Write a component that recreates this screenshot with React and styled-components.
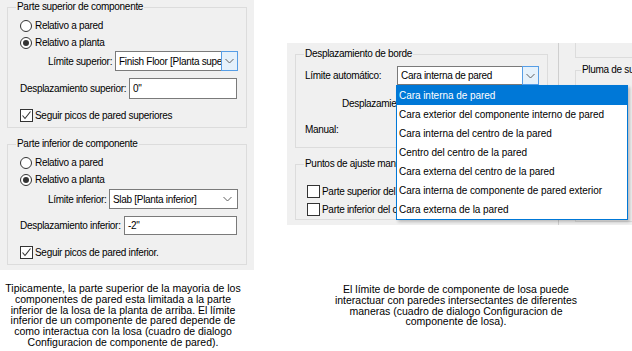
import React from "react";
import styled, { createGlobalStyle } from "styled-components";

const GlobalStyle = createGlobalStyle`
  html, body { margin: 0; padding: 0; background: #ffffff; }
  body {
    font-family: "Liberation Sans", Arial, sans-serif;
    font-size: 10px;
    letter-spacing: -0.3px;
    color: #000;
  }
  * { box-sizing: border-box; }
`;

const Page = styled.div`
  width: 632px;
  height: 351px;
  display: flex;
  align-items: flex-start;
  overflow: hidden;
`;

const LeftColumn = styled.div`
  width: 254px;
  flex: none;
  display: flex;
  flex-direction: column;
`;

const RightColumn = styled.div`
  width: 345px;
  flex: none;
  margin-left: 33px;
  padding-top: 43px;
  display: flex;
  flex-direction: column;
`;

const LeftPanel = styled.div`
  background: #f0f0f0;
  padding: 0 7px 5px 7px;
  display: flex;
  flex-direction: column;
`;

const Group = styled.fieldset`
  margin: 0;
  min-width: 0;
  border: 1px solid #dcdcdc;
  padding: ${(p) => p.$pad || "3px 8px 4px 8px"};
  & + & {
    margin-top: ${(p) => p.$gap || 11}px;
  }
`;

const Legend = styled.legend`
  padding: 0 1px;
  margin-left: ${(p) => p.$ml || 0}px;
  line-height: 14px;
  white-space: nowrap;
`;

const Row = styled.div`
  display: flex;
  align-items: center;
  height: ${(p) => p.$h || 17}px;
  margin-top: ${(p) => p.$mt || 0}px;
  padding-left: ${(p) => p.$indent || 0}px;
  gap: ${(p) => p.$gap || 0}px;
  white-space: nowrap;
`;

const Label = styled.span`
  flex: none;
  width: ${(p) => (p.$w ? `${p.$w}px` : "auto")};
  white-space: nowrap;
`;

const RadioCircle = styled.span`
  flex: none;
  width: 12px;
  height: 12px;
  border: 1px solid #333;
  border-radius: 50%;
  background: #fff;
  display: flex;
  align-items: center;
  justify-content: center;
  margin-right: 3px;
  &::after {
    content: "";
    width: 6px;
    height: 6px;
    border-radius: 50%;
    background: #333;
    display: ${(p) => (p.$checked ? "block" : "none")};
  }
`;

const CheckBox = styled.span`
  flex: none;
  width: 13px;
  height: 13px;
  border: 1px solid #333;
  background: #fff;
  display: flex;
  align-items: center;
  justify-content: center;
  margin-right: 2px;
`;

const Select = styled.div`
  position: relative;
  flex: ${(p) => (p.$w ? "none" : "1")};
  min-width: 0;
  width: ${(p) => (p.$w ? `${p.$w}px` : "auto")};
  height: ${(p) => p.$h || 20}px;
  border: 1px solid #7a7a7a;
  background: #fff;
  display: flex;
  align-items: stretch;
`;

const SelectText = styled.span`
  flex: 1;
  min-width: 0;
  overflow: hidden;
  white-space: nowrap;
  padding-left: 3px;
  display: flex;
  align-items: center;
`;

const SelectButton = styled.span`
  flex: none;
  width: ${(p) => (p.$hot ? 17 : 16)}px;
  display: flex;
  align-items: center;
  justify-content: center;
  background: ${(p) => (p.$hot ? "#e5f1fb" : "transparent")};
  border: ${(p) => (p.$hot ? "1px solid #569de5" : "none")};
  margin: ${(p) => (p.$hot ? "-1px -1px -1px 0" : "0 2px 0 0")};
`;

const TextInput = styled.div`
  flex: 1;
  min-width: 0;
  height: ${(p) => p.$h || 20}px;
  margin-right: 1px;
  border: 1px solid #7a7a7a;
  background: #fff;
  padding-left: 3px;
  display: flex;
  align-items: center;
`;

const DropList = styled.div`
  position: absolute;
  z-index: 10;
  left: -2px;
  top: calc(100% + 1px);
  width: 232px;
  border: 1px solid #0078d7;
  background: #fff;
  box-shadow: 2px 2px 3px rgba(0, 0, 0, 0.22);
  display: flex;
  flex-direction: column;
`;

const DropItem = styled.div`
  height: 19px;
  padding-left: 2px;
  display: flex;
  align-items: center;
  white-space: nowrap;
  letter-spacing: -0.05px;
  background: ${(p) => (p.$active ? "#0078d7" : "transparent")};
  color: ${(p) => (p.$active ? "#fff" : "#000")};
`;

const Caption = styled.p`
  margin: ${(p) => p.$mt}px 0 0 0;
  padding-right: ${(p) => p.$pr || 0}px;
  width: ${(p) => p.$w}px;
  text-align: center;
  line-height: 10.8px;
  font-size: 10.5px;
  letter-spacing: 0;
`;

const RightPanel = styled.div`
  background: #f0f0f0;
  height: 182px;
  display: flex;
`;

const PanelMain = styled.div`
  width: 271px;
  flex: none;
  padding: 4px 10px 5px 8px;
  display: flex;
  flex-direction: column;
  position: relative;
  z-index: 2;
`;

const Side = styled.div`
  flex: 1;
  border-left: 1px solid #cfcfcf;
  padding-left: 16px;
  overflow: hidden;
  display: flex;
  flex-direction: column;
`;

const ClippedBox = styled.div`
  width: 100px;
  height: 15px;
  border-left: 1px solid #dcdcdc;
  border-bottom: 1px solid #dcdcdc;
  flex: none;
`;

const SideGroup = styled.fieldset`
  margin: 5px 0 0 0;
  width: 100px;
  height: 159px;
  border: 1px solid #dcdcdc;
  padding: 0;
  flex: none;
`;

const Chevron = () => (
  <svg width="9" height="6" viewBox="0 0 9 6">
    <polyline points="0.5,1 4.5,5 8.5,1" fill="none" stroke="#606060" strokeWidth="1" />
  </svg>
);

const Check = () => (
  <svg width="11" height="11" viewBox="0 0 11 11">
    <polyline points="1.5,5.5 4,8.5 9.5,1.5" fill="none" stroke="#333" strokeWidth="1.1" />
  </svg>
);

const Radio = ({ checked, children }) => (
  <Row $h={17}>
    <RadioCircle $checked={checked} />
    {children}
  </Row>
);

const CheckRow = ({ checked, children, mt, indent }) => (
  <Row $h={16} $mt={mt} $indent={indent}>
    <CheckBox>{checked && <Check />}</CheckBox>
    {children}
  </Row>
);

const dropItems = [
  "Cara interna de pared",
  "Cara exterior del componente interno de pared",
  "Cara interna del centro de la pared",
  "Centro del centro de la pared",
  "Cara externa del centro de la pared",
  "Cara interna de componente de pared exterior",
  "Cara externa de la pared",
];

const ComponentGroup = ({ title, limitLabel, limitW, limitGap, limitValue, hot, selH, selMt, offLabel, offW, offGap, offValue, inpH, inpMt, checkLabel, checkMt }) => (
  <Group>
    <Legend>{title}</Legend>
    <div style={{ paddingLeft: 4 }}>
      <Radio>Relativo a pared</Radio>
      <Radio checked>Relativo a planta</Radio>
      <Row $h={selH} $mt={selMt} $indent={28} $gap={limitGap}>
        <Label $w={limitW}>{limitLabel}</Label>
        <Select $h={selH}>
          <SelectText>{limitValue}</SelectText>
          <SelectButton $hot={hot}>
            <Chevron />
          </SelectButton>
        </Select>
      </Row>
      <Row $h={inpH} $mt={inpMt} $gap={offGap}>
        <Label $w={offW}>{offLabel}</Label>
        <TextInput $h={inpH}>{offValue}</TextInput>
      </Row>
      <CheckRow checked mt={checkMt} indent={0}>
        {checkLabel}
      </CheckRow>
    </div>
  </Group>
);

export default function App() {
  return (
    <>
      <GlobalStyle />
      <Page>
        <LeftColumn>
          <LeftPanel>
            <ComponentGroup
              title="Parte superior de componente"
              limitLabel="Límite superior:"
              limitW={62}
              limitGap={5}
              limitValue="Finish Floor [Planta superior]"
              hot
              selH={20}
              selMt={0}
              offLabel="Desplazamiento superior:"
              offW={104}
              offGap={5}
              offValue={'0"'}
              inpH={21}
              inpMt={7}
              checkLabel="Seguir picos de pared superiores"
              checkMt={8}
            />
            <ComponentGroup
              title="Parte inferior de componente"
              limitLabel="Límite inferior:"
              limitW={55}
              limitGap={6}
              limitValue="Slab [Planta inferior]"
              selH={20}
              selMt={1}
              offLabel="Desplazamiento inferior:"
              offW={98}
              offGap={6}
              offValue={'-2"'}
              inpH={19}
              inpMt={7}
              checkLabel="Seguir picos de pared inferior."
              checkMt={9}
            />
          </LeftPanel>
          <Caption $mt={13} $w={246}>
            Tipicamente, la parte superior de la mayoria de los
            <br />
            componentes de pared esta limitada a la parte
            <br />
            inferior de la losa de la planta de arriba. El límite
            <br />
            inferior de un componente de pared depende de
            <br />
            como interactua con la losa (cuadro de dialogo
            <br />
            Configuracion de componente de pared).
          </Caption>
        </LeftColumn>

        <RightColumn>
          <RightPanel>
            <PanelMain>
              <Group $pad="0 8px 10px 8px">
                <Legend>Desplazamiento de borde</Legend>
                <Row $h={19} $mt={5} $indent={1} $gap={4}>
                  <Label $w={88}>Límite automático:</Label>
                  <Select $w={142} $h={19}>
                    <SelectText>Cara interna de pared</SelectText>
                    <SelectButton $hot>
                      <Chevron />
                    </SelectButton>
                    <DropList>
                      {dropItems.map((t, i) => (
                        <DropItem key={t} $active={i === 0}>
                          {t}
                        </DropItem>
                      ))}
                    </DropList>
                  </Select>
                </Row>
                <Row $h={16} $mt={10} $indent={38}>
                  <Label>Desplazamiento:</Label>
                </Row>
                <Row $h={16} $mt={10} $indent={1}>
                  <Label>Manual:</Label>
                </Row>
              </Group>
              <Group $pad="0 8px 2px 8px" $gap={9}>
                <Legend>Puntos de ajuste manual</Legend>
                <CheckRow mt={12} indent={3}>
                  Parte superior del componente
                </CheckRow>
                <CheckRow mt={2} indent={3}>
                  Parte inferior del componente
                </CheckRow>
              </Group>
            </PanelMain>
            <Side>
              <ClippedBox />
              <SideGroup>
                <Legend $ml={5}>Pluma de superficie</Legend>
              </SideGroup>
            </Side>
          </RightPanel>
          <Caption $mt={59} $w={345} $pr={7}>
            El límite de borde de componente de losa puede
            <br />
            interactuar con paredes intersectantes de diferentes
            <br />
            maneras (cuadro de dialogo Configuracion de
            <br />
            componente de losa).
          </Caption>
        </RightColumn>
      </Page>
    </>
  );
}
